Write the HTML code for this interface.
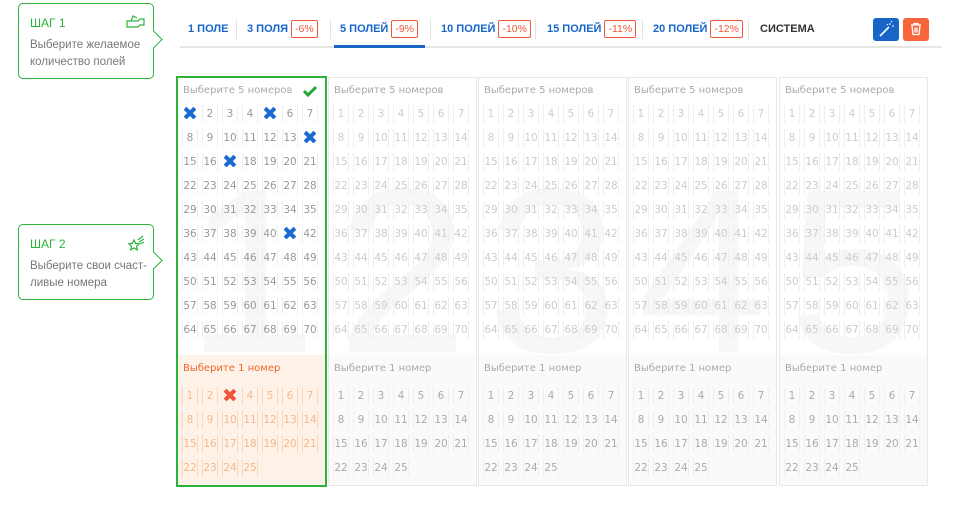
<!DOCTYPE html>
<html><head><meta charset="utf-8"><style>
*{margin:0;padding:0;box-sizing:border-box}
body{width:977px;height:507px;background:#fff;position:relative;overflow:hidden;font-family:"DejaVu Sans","Liberation Sans",sans-serif}
.step{position:absolute;left:18px;width:136px;height:76px;border:1px solid #2bb33a;border-radius:5px;background:#fff;padding:12px 0 0 11px}
.step:after{content:"";position:absolute;right:-7px;top:29px;width:12px;height:12px;background:#fff;border-right:1px solid #2bb33a;border-top:1px solid #2bb33a;transform:rotate(45deg)}
.step h4{font:400 12px "Liberation Sans",sans-serif;color:#2bb33a;margin-bottom:7px}
.step p{font:11.5px/17px "Liberation Sans",sans-serif;color:#777}
.step svg{position:absolute;right:6px;top:10px}
.tabs{position:absolute;left:180px;top:14px;width:762px;height:34px;border-bottom:2px solid #e6e6e6;font:700 11px "Liberation Sans",sans-serif;color:#1766c7}
.tab{position:absolute;top:4px;height:22px;line-height:22px}
.sep{position:absolute;top:5px;width:1px;height:20px;background:#e3e3e3}
.bd{display:inline-block;border:1px solid #f0563a;color:#f0563a;font-weight:400;border-radius:2px;padding:0 3px;line-height:16px;margin-left:3px;font-size:10.5px}
.act{position:absolute;left:154px;width:91px;top:31px;height:3px;background:#1766c7}
.btn{position:absolute;top:18px;width:26px;height:23px;border-radius:3px}
.card{position:absolute;top:77px;width:149px;height:409px;border:1px solid #e8e8e8;overflow:hidden}
.card.a{border-color:#fff}
.frame{position:absolute;left:176px;top:76px;width:151px;height:411px;border:2px solid #2bb33a;z-index:5}
.big{position:absolute;left:0;width:100%;top:75px;text-align:center;font:235px/1 "Liberation Sans",sans-serif;color:#f7f7f7}
.ttl{position:absolute;left:5px;top:7px;font-size:10px;color:#aaa}
.g{position:absolute;left:2px;width:140px;display:grid;grid-template-columns:repeat(7,20px);grid-auto-rows:24px}
.g b{display:block;margin:3px 2px;height:18px;line-height:18px;text-align:center;font-weight:400;font-size:10.5px;border-left:1px solid #efefef;border-right:1px solid #efefef;color:#ccc}
.a .g b{color:#999}
.g b.x{border:none;color:#1a6ad2;font-size:19px;font-weight:700;margin:2px 0;line-height:20px}
.bot{position:absolute;left:0;top:277px;width:100%;height:140px;background:#fafafa}
.a .bot{background:#fdf1e8}
.bot .ttl{top:8px;color:#aaa}
.a .bot .ttl{color:#f0672a}
.a .bot .g b{color:#f7b98a;border-color:#fad9bd}
.a .bot .g b.x{color:#f0563a}
.card:not(.a) .bot .g b{color:#aaa}
</style></head><body>

<div class="step" style="top:3px"><h4>ШАГ 1</h4><p>Выберите желаемое<br>количество полей</p>
<svg width="22" height="16" viewBox="0 0 22 16" fill="none" stroke="#2bb33a" stroke-width="1.2"><path d="M2 7h11l2-2h4v6h-4l-2 2H2zM6 7l2-5 4 2"/></svg></div>
<div class="step" style="top:224px"><h4>ШАГ 2</h4><p>Выберите свои счаст-<br>ливые номера</p>
<svg width="20" height="18" viewBox="0 0 20 18" fill="none" stroke="#2bb33a" stroke-width="1.2"><path d="M7 5l1.6 3.4 3.6.4-2.7 2.5.8 3.6L7 13l-3.3 1.9.8-3.6L1.8 8.8l3.6-.4z"/><path d="M11 5l5-4M12 7l5-3M13 9l4-2"/></svg></div>

<div class="tabs">
<div class="tab" style="left:8px">1 ПОЛЕ</div><div class="sep" style="left:56px"></div>
<div class="tab" style="left:67px">3 ПОЛЯ<span class="bd">-6%</span></div><div class="sep" style="left:150px"></div>
<div class="tab" style="left:160px">5 ПОЛЕЙ<span class="bd">-9%</span></div><div class="sep" style="left:250px"></div>
<div class="tab" style="left:261px">10 ПОЛЕЙ<span class="bd">-10%</span></div><div class="sep" style="left:355px"></div>
<div class="tab" style="left:367px">15 ПОЛЕЙ<span class="bd">-11%</span></div><div class="sep" style="left:462px"></div>
<div class="tab" style="left:473px">20 ПОЛЕЙ<span class="bd">-12%</span></div><div class="sep" style="left:568px"></div>
<div class="tab" style="left:580px;color:#333">СИСТЕМА</div>
<div class="act"></div>
</div>
<div class="btn" style="left:873px;background:#1766c7"><svg width="26" height="23" viewBox="0 0 26 23" stroke="#fff" fill="none" stroke-width="1.6"><path d="M7 18l9-9"/><path d="M17 5v2M19 8h2M15 7l-1-1M18 4l1-1" stroke-width="1"/></svg></div>
<div class="btn" style="left:903px;background:#f8643c"><svg width="26" height="23" viewBox="0 0 26 23" fill="none" stroke="#fff" stroke-width="1.3"><path d="M8 7h10M11 7V5.5h4V7M9 7.5l1 9h6l1-9M12 9.5v5M14 9.5v5"/></svg></div>

<div class="card a" style="left:177px"><div class="big">1</div><div class="ttl">Выберите 5 номеров</div>
<svg style="position:absolute;left:125px;top:7px" width="14" height="12" viewBox="0 0 14 12"><path d="M1 6l4 4 8-8" stroke="#22a832" stroke-width="3" fill="none"/></svg>
<div class="g" style="top:24px"><b class="x">✖</b><b>2</b><b>3</b><b>4</b><b class="x">✖</b><b>6</b><b>7</b><b>8</b><b>9</b><b>10</b><b>11</b><b>12</b><b>13</b><b class="x">✖</b><b>15</b><b>16</b><b class="x">✖</b><b>18</b><b>19</b><b>20</b><b>21</b><b>22</b><b>23</b><b>24</b><b>25</b><b>26</b><b>27</b><b>28</b><b>29</b><b>30</b><b>31</b><b>32</b><b>33</b><b>34</b><b>35</b><b>36</b><b>37</b><b>38</b><b>39</b><b>40</b><b class="x">✖</b><b>42</b><b>43</b><b>44</b><b>45</b><b>46</b><b>47</b><b>48</b><b>49</b><b>50</b><b>51</b><b>52</b><b>53</b><b>54</b><b>55</b><b>56</b><b>57</b><b>58</b><b>59</b><b>60</b><b>61</b><b>62</b><b>63</b><b>64</b><b>65</b><b>66</b><b>67</b><b>68</b><b>69</b><b>70</b></div>
<div class="bot"><div class="ttl">Выберите 1 номер</div><div class="g" style="top:29px"><b>1</b><b>2</b><b class="x">✖</b><b>4</b><b>5</b><b>6</b><b>7</b><b>8</b><b>9</b><b>10</b><b>11</b><b>12</b><b>13</b><b>14</b><b>15</b><b>16</b><b>17</b><b>18</b><b>19</b><b>20</b><b>21</b><b>22</b><b>23</b><b>24</b><b>25</b></div></div></div>
<div class="frame"></div>

<div class="card" style="left:328px"><div class="big">2</div><div class="ttl">Выберите 5 номеров</div>
<div class="g" style="top:24px"><b>1</b><b>2</b><b>3</b><b>4</b><b>5</b><b>6</b><b>7</b><b>8</b><b>9</b><b>10</b><b>11</b><b>12</b><b>13</b><b>14</b><b>15</b><b>16</b><b>17</b><b>18</b><b>19</b><b>20</b><b>21</b><b>22</b><b>23</b><b>24</b><b>25</b><b>26</b><b>27</b><b>28</b><b>29</b><b>30</b><b>31</b><b>32</b><b>33</b><b>34</b><b>35</b><b>36</b><b>37</b><b>38</b><b>39</b><b>40</b><b>41</b><b>42</b><b>43</b><b>44</b><b>45</b><b>46</b><b>47</b><b>48</b><b>49</b><b>50</b><b>51</b><b>52</b><b>53</b><b>54</b><b>55</b><b>56</b><b>57</b><b>58</b><b>59</b><b>60</b><b>61</b><b>62</b><b>63</b><b>64</b><b>65</b><b>66</b><b>67</b><b>68</b><b>69</b><b>70</b></div>
<div class="bot"><div class="ttl">Выберите 1 номер</div><div class="g" style="top:29px"><b>1</b><b>2</b><b>3</b><b>4</b><b>5</b><b>6</b><b>7</b><b>8</b><b>9</b><b>10</b><b>11</b><b>12</b><b>13</b><b>14</b><b>15</b><b>16</b><b>17</b><b>18</b><b>19</b><b>20</b><b>21</b><b>22</b><b>23</b><b>24</b><b>25</b></div></div></div>

<div class="card" style="left:478px"><div class="big">3</div><div class="ttl">Выберите 5 номеров</div>
<div class="g" style="top:24px"><b>1</b><b>2</b><b>3</b><b>4</b><b>5</b><b>6</b><b>7</b><b>8</b><b>9</b><b>10</b><b>11</b><b>12</b><b>13</b><b>14</b><b>15</b><b>16</b><b>17</b><b>18</b><b>19</b><b>20</b><b>21</b><b>22</b><b>23</b><b>24</b><b>25</b><b>26</b><b>27</b><b>28</b><b>29</b><b>30</b><b>31</b><b>32</b><b>33</b><b>34</b><b>35</b><b>36</b><b>37</b><b>38</b><b>39</b><b>40</b><b>41</b><b>42</b><b>43</b><b>44</b><b>45</b><b>46</b><b>47</b><b>48</b><b>49</b><b>50</b><b>51</b><b>52</b><b>53</b><b>54</b><b>55</b><b>56</b><b>57</b><b>58</b><b>59</b><b>60</b><b>61</b><b>62</b><b>63</b><b>64</b><b>65</b><b>66</b><b>67</b><b>68</b><b>69</b><b>70</b></div>
<div class="bot"><div class="ttl">Выберите 1 номер</div><div class="g" style="top:29px"><b>1</b><b>2</b><b>3</b><b>4</b><b>5</b><b>6</b><b>7</b><b>8</b><b>9</b><b>10</b><b>11</b><b>12</b><b>13</b><b>14</b><b>15</b><b>16</b><b>17</b><b>18</b><b>19</b><b>20</b><b>21</b><b>22</b><b>23</b><b>24</b><b>25</b></div></div></div>

<div class="card" style="left:628px"><div class="big">4</div><div class="ttl">Выберите 5 номеров</div>
<div class="g" style="top:24px"><b>1</b><b>2</b><b>3</b><b>4</b><b>5</b><b>6</b><b>7</b><b>8</b><b>9</b><b>10</b><b>11</b><b>12</b><b>13</b><b>14</b><b>15</b><b>16</b><b>17</b><b>18</b><b>19</b><b>20</b><b>21</b><b>22</b><b>23</b><b>24</b><b>25</b><b>26</b><b>27</b><b>28</b><b>29</b><b>30</b><b>31</b><b>32</b><b>33</b><b>34</b><b>35</b><b>36</b><b>37</b><b>38</b><b>39</b><b>40</b><b>41</b><b>42</b><b>43</b><b>44</b><b>45</b><b>46</b><b>47</b><b>48</b><b>49</b><b>50</b><b>51</b><b>52</b><b>53</b><b>54</b><b>55</b><b>56</b><b>57</b><b>58</b><b>59</b><b>60</b><b>61</b><b>62</b><b>63</b><b>64</b><b>65</b><b>66</b><b>67</b><b>68</b><b>69</b><b>70</b></div>
<div class="bot"><div class="ttl">Выберите 1 номер</div><div class="g" style="top:29px"><b>1</b><b>2</b><b>3</b><b>4</b><b>5</b><b>6</b><b>7</b><b>8</b><b>9</b><b>10</b><b>11</b><b>12</b><b>13</b><b>14</b><b>15</b><b>16</b><b>17</b><b>18</b><b>19</b><b>20</b><b>21</b><b>22</b><b>23</b><b>24</b><b>25</b></div></div></div>

<div class="card" style="left:779px"><div class="big">5</div><div class="ttl">Выберите 5 номеров</div>
<div class="g" style="top:24px"><b>1</b><b>2</b><b>3</b><b>4</b><b>5</b><b>6</b><b>7</b><b>8</b><b>9</b><b>10</b><b>11</b><b>12</b><b>13</b><b>14</b><b>15</b><b>16</b><b>17</b><b>18</b><b>19</b><b>20</b><b>21</b><b>22</b><b>23</b><b>24</b><b>25</b><b>26</b><b>27</b><b>28</b><b>29</b><b>30</b><b>31</b><b>32</b><b>33</b><b>34</b><b>35</b><b>36</b><b>37</b><b>38</b><b>39</b><b>40</b><b>41</b><b>42</b><b>43</b><b>44</b><b>45</b><b>46</b><b>47</b><b>48</b><b>49</b><b>50</b><b>51</b><b>52</b><b>53</b><b>54</b><b>55</b><b>56</b><b>57</b><b>58</b><b>59</b><b>60</b><b>61</b><b>62</b><b>63</b><b>64</b><b>65</b><b>66</b><b>67</b><b>68</b><b>69</b><b>70</b></div>
<div class="bot"><div class="ttl">Выберите 1 номер</div><div class="g" style="top:29px"><b>1</b><b>2</b><b>3</b><b>4</b><b>5</b><b>6</b><b>7</b><b>8</b><b>9</b><b>10</b><b>11</b><b>12</b><b>13</b><b>14</b><b>15</b><b>16</b><b>17</b><b>18</b><b>19</b><b>20</b><b>21</b><b>22</b><b>23</b><b>24</b><b>25</b></div></div></div>

</body></html>
